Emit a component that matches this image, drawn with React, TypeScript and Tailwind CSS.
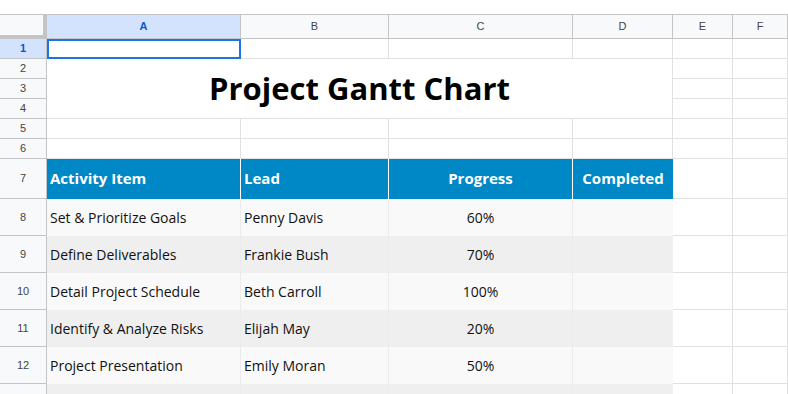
import React from 'react'

const rows = [
  { item: 'Set & Prioritize Goals', lead: 'Penny Davis', progress: '60%' },
  { item: 'Define Deliverables', lead: 'Frankie Bush', progress: '70%' },
  { item: 'Detail Project Schedule', lead: 'Beth Carroll', progress: '100%' },
  { item: 'Identify & Analyze Risks', lead: 'Elijah May', progress: '20%' },
  { item: 'Project Presentation', lead: 'Emily Moran', progress: '50%' },
]

const hdr = 'flex items-center justify-center border-r border-b border-[#c4c4c4] bg-[#f8f9fa] text-[11px] text-[#444] font-["Liberation_Sans",Arial,sans-serif]'
const rowHdr = 'flex items-center justify-center border-r border-b border-[#c4c4c4] bg-[#f8f9fa] text-[11px] text-[#444] font-["Liberation_Sans",Arial,sans-serif]'
const grid = 'border-r border-b border-[#e1e1e1] bg-white'
const th = 'flex items-center pb-[2px] bg-[#0087c5] text-white font-bold text-[15px]'
const td = 'flex items-center text-[14px] text-[#111]'

export default function App() {
  return (
    <div className="w-[788px] h-[394px] overflow-hidden bg-white pt-[14px] font-['Open_Sans',sans-serif]">
      <div className="grid border-t border-[#c4c4c4] grid-cols-[47px_194px_148px_184px_100px_60px_1fr] grid-rows-[24px_20px_20px_20px_20px_20px_20px_40px_37px_37px_37px_37px_37px_37px]">
        {/* column headers */}
        <div className="bg-[#f8f9fa] border-r-[4px] border-b-[4px] border-[#c4c4c4]" />
        <div className={`${hdr} !bg-[#d3e3fd] !text-[#0b57d0] font-bold`}>A</div>
        <div className={hdr}>B</div>
        <div className={hdr}>C</div>
        <div className={hdr}>D</div>
        <div className={hdr}>E</div>
        <div className={hdr}>F</div>

        {/* row 1 */}
        <div className={`${rowHdr} !bg-[#d3e3fd] !text-[#0b57d0] font-bold`}>1</div>
        <div className="border-2 border-[#1a73e8] bg-white" />
        <div className={grid} />
        <div className={grid} />
        <div className={grid} />
        <div className={grid} />
        <div className={grid} />

        {/* rows 2-4 with merged title */}
        <div className={rowHdr}>2</div>
        <div className={`${grid} col-span-4 row-span-3 flex items-center justify-center`}>
          <span className="text-[31px] font-bold text-black leading-none">Project Gantt Chart</span>
        </div>
        <div className={grid} />
        <div className={grid} />
        <div className={rowHdr}>3</div>
        <div className={grid} />
        <div className={grid} />
        <div className={rowHdr}>4</div>
        <div className={grid} />
        <div className={grid} />

        {/* rows 5-6 */}
        {[5, 6].map(n => (
          <React.Fragment key={n}>
            <div className={rowHdr}>{n}</div>
            <div className={grid} />
            <div className={grid} />
            <div className={grid} />
            <div className={grid} />
            <div className={grid} />
            <div className={grid} />
          </React.Fragment>
        ))}

        {/* row 7 table header */}
        <div className={rowHdr}>7</div>
        <div className={`${th} pl-[3px] border-r border-white`}>Activity Item</div>
        <div className={`${th} pl-[3px] border-r border-white`}>Lead</div>
        <div className={`${th} justify-center border-r border-white`}>Progress</div>
        <div className={`${th} justify-center`}>Completed</div>
        <div className={grid} />
        <div className={grid} />

        {/* data rows */}
        {rows.map((r, i) => {
          const bg = i % 2 === 0 ? 'bg-[#f9f9f9]' : 'bg-[#efefef]'
          return (
            <React.Fragment key={i}>
              <div className={rowHdr}>{i + 8}</div>
              <div className={`${bg} ${td} pl-[3px] border-r border-[#ebebeb]`}>{r.item}</div>
              <div className={`${bg} ${td} pl-[3px] border-r border-[#ebebeb]`}>{r.lead}</div>
              <div className={`${bg} ${td} justify-center border-r border-[#ebebeb]`}>{r.progress}</div>
              <div className={bg} />
              <div className={grid} />
              <div className={grid} />
            </React.Fragment>
          )
        })}

        {/* row 13, only its top edge shows */}
        <div className={rowHdr} />
        <div className="bg-[#efefef] border-r border-[#ebebeb]" />
        <div className="bg-[#efefef] border-r border-[#ebebeb]" />
        <div className="bg-[#efefef] border-r border-[#ebebeb]" />
        <div className="bg-[#efefef]" />
        <div className={grid} />
        <div className={grid} />
      </div>
    </div>
  )
}
